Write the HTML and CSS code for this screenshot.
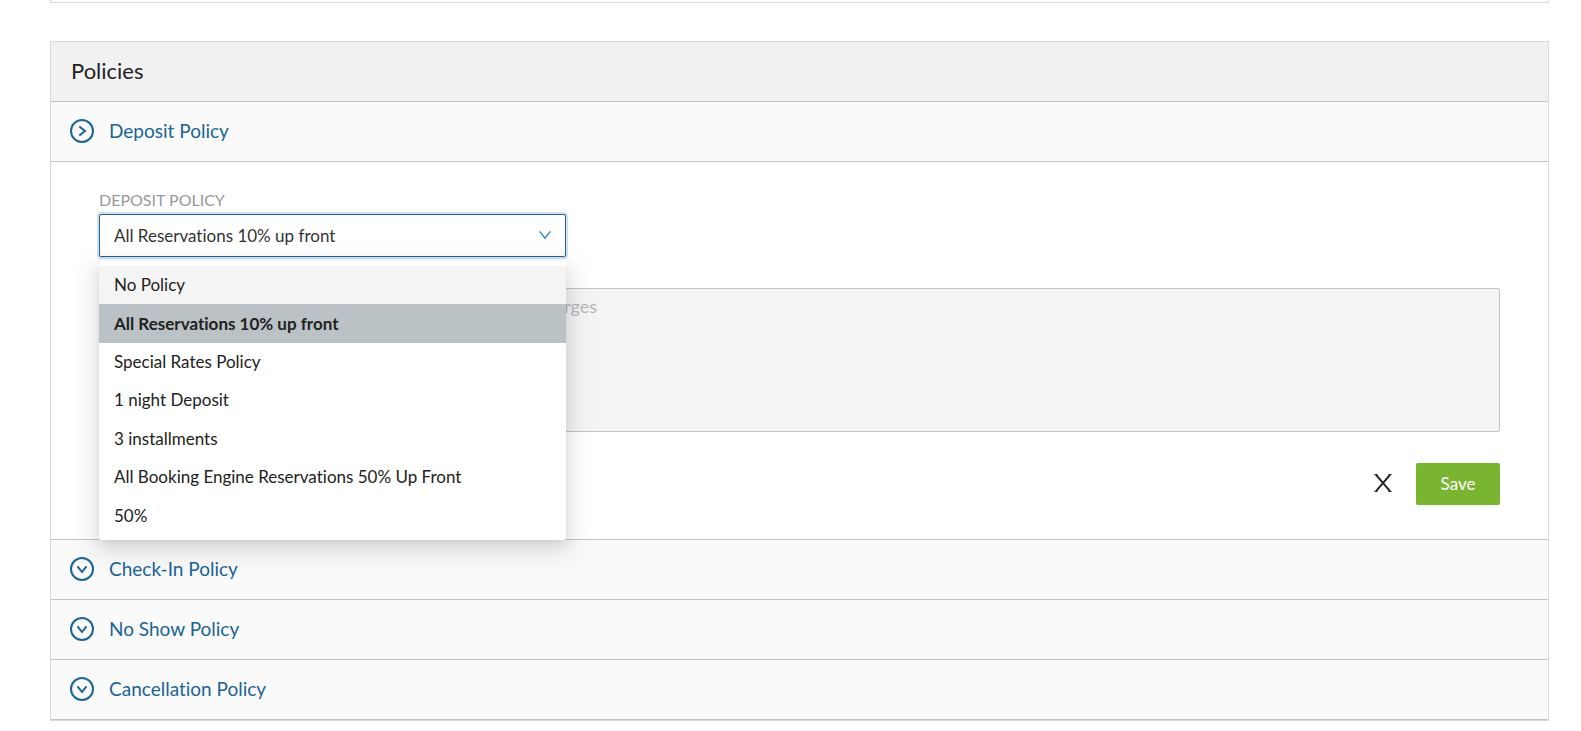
FILE: index.html
```
<!DOCTYPE html>
<html lang="en">

<head>
	<meta charset="UTF-8">
	<meta name="viewport" content="width=device-width, initial-scale=1.0">
	<title>Policies</title>
	<link rel="stylesheet" href="styles.css">
</head>

<body>
	<div class="card card-previous"></div>

	<section class="card">
		<h2 class="card-title">Policies</h2>

		<button type="button" class="panel-header" aria-expanded="true">
			<svg class="panel-icon" viewBox="0 0 24 24" aria-hidden="true">
				<circle cx="12" cy="12" r="11" />
				<path d="M9.3 7.5L15 12l-5.7 4.5" />
			</svg>
			Deposit Policy
		</button>
		<form class="panel-body">
			<label class="field-label" for="deposit-policy">DEPOSIT POLICY</label>
			<div class="select-wrap">
				<select id="deposit-policy" class="select">
					<option>No Policy</option>
					<option selected>All Reservations 10% up front</option>
					<option>Special Rates Policy</option>
					<option>1 night Deposit</option>
					<option>3 installments</option>
					<option>All Booking Engine Reservations 50% Up Front</option>
					<option>50%</option>
				</select>
				<svg class="select-arrow" viewBox="0 0 12 8" aria-hidden="true">
					<path d="M.6.4L6 7.2 11.4.4" />
				</svg>
				<ul class="dropdown" role="listbox" aria-label="Deposit policy">
					<li class="option active" role="option">No Policy</li>
					<li class="option selected" role="option" aria-selected="true">All Reservations 10% up front</li>
					<li class="option" role="option">Special Rates Policy</li>
					<li class="option" role="option">1 night Deposit</li>
					<li class="option" role="option">3 installments</li>
					<li class="option" role="option">All Booking Engine Reservations 50% Up Front</li>
					<li class="option" role="option">50%</li>
				</ul>
			</div>
			<textarea class="textarea" aria-label="Deposit policy description" placeholder="Describe the deposit policies including all of the extra charges" disabled></textarea>
			<div class="actions">
				<button type="button" class="cancel-button" aria-label="Cancel">
					<svg viewBox="0 0 18 18" aria-hidden="true">
						<path d="M2 .8L16 17.2M16 .8L2 17.2" />
						<path class="serif" d="M.3.6h3.4M14.3.6h3.4M.3 17.4h3.4M14.3 17.4h3.4" />
					</svg>
				</button>
				<button type="button" class="save-button">Save</button>
			</div>
		</form>

		<button type="button" class="panel-header" aria-expanded="false">
			<svg class="panel-icon" viewBox="0 0 24 24" aria-hidden="true">
				<circle cx="12" cy="12" r="11" />
				<path d="M7.5 9.3L12 15l4.5-5.7" />
			</svg>
			Check-In Policy
		</button>
		<button type="button" class="panel-header" aria-expanded="false">
			<svg class="panel-icon" viewBox="0 0 24 24" aria-hidden="true">
				<circle cx="12" cy="12" r="11" />
				<path d="M7.5 9.3L12 15l4.5-5.7" />
			</svg>
			No Show Policy
		</button>
		<button type="button" class="panel-header" aria-expanded="false">
			<svg class="panel-icon" viewBox="0 0 24 24" aria-hidden="true">
				<circle cx="12" cy="12" r="11" />
				<path d="M7.5 9.3L12 15l4.5-5.7" />
			</svg>
			Cancellation Policy
		</button>
	</section>
</body>

</html>
```
FILE: styles.css
```
* {
	box-sizing: border-box;
}

body {
	margin: 0;
	padding: 0 32px 10px 50px;
	background-color: #fff;
	color: #222;
	font-family: Lato, sans-serif;
	font-size: 17px;
	font-variant-ligatures: none;
}

button,
select,
textarea {
	font: inherit;
	font-variant-ligatures: none;
}

.card {
	border: 1px solid #d9d9d9;
}

.card-previous {
	height: 3px;
	margin-bottom: 38px;
	border-top: none;
}

.card-title {
	margin: 0;
	padding: 0 20px 2px;
	border-bottom: 1px solid #c4c4c4;
	background-color: #f1f1f1;
	font-size: 22px;
	font-weight: 400;
	line-height: 57px;
}

.panel-header {
	display: flex;
	align-items: center;
	gap: 15px;
	width: 100%;
	height: 60px;
	padding: 0 19px 2px;
	border: none;
	border-bottom: 1px solid #c4c4c4;
	background-color: #fafafa;
	color: #1a6496;
	font-size: 19px;
	text-align: left;
	cursor: pointer;
}

.panel-icon {
	width: 24px;
	height: 24px;
	fill: none;
	stroke: #1a6496;
	stroke-width: 2;
}

.panel-body {
	padding: 26px 48px 34px;
	border-bottom: 1px solid #c4c4c4;
}

.field-label {
	display: block;
	padding-bottom: 2px;
	color: #999;
	font-size: 16px;
	line-height: 24px;
}

.select-wrap {
	position: relative;
	width: calc(100% / 3);
	margin-bottom: 31px;
}

.select {
	display: block;
	width: 100%;
	height: 43px;
	padding: 0 14px;
	border: 1px solid #24669a;
	border-radius: 2px;
	outline: none;
	background-color: #fff;
	box-shadow: 0 0 0 2px rgba(36, 102, 154, 0.2);
	color: #333;
	appearance: none;
}

.select-arrow {
	position: absolute;
	top: 17px;
	right: 15px;
	width: 12px;
	height: 8px;
	fill: none;
	stroke: #2a87d0;
	stroke-width: 1.4;
}

.dropdown {
	position: absolute;
	top: 47px;
	left: 0;
	z-index: 1;
	display: grid;
	grid-auto-rows: 1fr;
	width: 100%;
	height: 279px;
	margin: 0;
	padding: 5px 0;
	border-radius: 2px;
	background-color: #fff;
	box-shadow: 0 3px 6px -4px rgba(0, 0, 0, 0.12), 0 6px 16px rgba(0, 0, 0, 0.1), 0 9px 28px 8px rgba(0, 0, 0, 0.07);
	list-style: none;
}

.option {
	display: flex;
	align-items: center;
	padding: 0 15px 1px;
	cursor: pointer;
}

.option.active {
	background-color: #f4f4f4;
}

.option.selected {
	background-color: #bac2c5;
	font-weight: 700;
}

.textarea {
	display: block;
	width: 100%;
	height: 144px;
	margin-bottom: 31px;
	padding: 6px 11px;
	border: 1px solid #c4c4c4;
	border-radius: 2px;
	background-color: #f4f4f4;
	font-size: 18px;
	resize: none;
}

.textarea::placeholder {
	color: #b8b8b8;
}

.actions {
	display: flex;
	justify-content: flex-end;
	align-items: center;
	gap: 24px;
}

.cancel-button {
	display: flex;
	padding: 0 0 2px;
	border: none;
	background: none;
	cursor: pointer;
}

.cancel-button svg {
	width: 18px;
	height: 18px;
	fill: none;
	stroke: #222;
	stroke-width: 2;
}

.cancel-button .serif {
	stroke-width: 1;
}

.save-button {
	width: 84px;
	height: 42px;
	padding: 0 0 2px;
	border: none;
	border-radius: 2px;
	background-color: #7ab531;
	box-shadow: 0 2px 0 rgba(0, 0, 0, 0.04);
	color: #fff;
	cursor: pointer;
}
```
